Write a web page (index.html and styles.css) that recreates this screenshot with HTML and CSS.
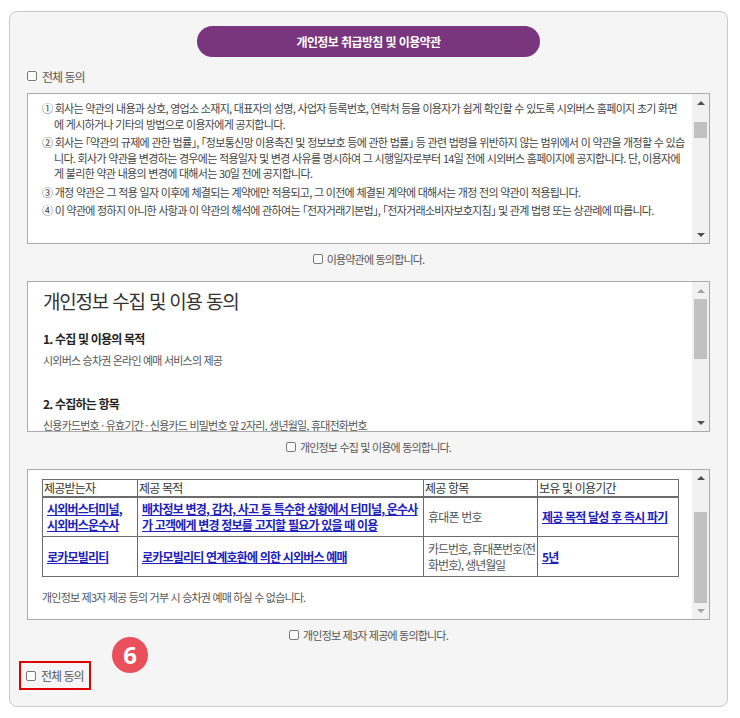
FILE: index.html
```html
<!DOCTYPE html>
<html lang="ko">
<head>
  <meta charset="UTF-8" />
  <meta name="viewport" content="width=device-width, initial-scale=1.0" />
  <title>개인정보 취급방침 및 이용약관</title>
  <link rel="stylesheet" href="styles.css">
</head>
<body>
  <section class="terms-wrap">
    <h1 class="terms-title">개인정보 취급방침 및 이용약관</h1>

    <label class="chk-all">
      <input type="checkbox" class="chk"> <span>전체 동의</span>
    </label>

    <!-- 이용약관 -->
    <div class="box">
      <div class="box-body terms-text">
        <p>① 회사는 약관의 내용과 상호, 영업소 소재지, 대표자의 성명, 사업자 등록번호, 연락처 등을 이용자가 쉽게 확인할 수 있도록 시외버스 홈페이지 초기 화면<br>에 게시하거나 기타의 방법으로 이용자에게 공지합니다.</p>
        <p>② 회사는 「약관의 규제에 관한 법률」, 「정보통신망 이용촉진 및 정보보호 등에 관한 법률」 등 관련 법령을 위반하지 않는 범위에서 이 약관을 개정할 수 있습<br>니다. 회사가 약관을 변경하는 경우에는 적용일자 및 변경 사유를 명시하여 그 시행일자로부터 14일 전에 시외버스 홈페이지에 공지합니다. 단, 이용자에<br>게 불리한 약관 내용의 변경에 대해서는 30일 전에 공지합니다.</p>
        <p>③ 개정 약관은 그 적용 일자 이후에 체결되는 계약에만 적용되고, 그 이전에 체결된 계약에 대해서는 개정 전의 약관이 적용됩니다.</p>
        <p>④ 이 약관에 정하지 아니한 사항과 이 약관의 해석에 관하여는 「전자거래기본법」, 「전자거래소비자보호지침」 및 관계 법령 또는 상관례에 따릅니다.</p>
      </div>
      <div class="sbar">
        <span class="arr up"></span>
        <div class="track"><div class="thumb thumb-1"></div></div>
        <span class="arr down"></span>
      </div>
    </div>
    <label class="agree-row">
      <input type="checkbox" class="chk"> <span>이용약관에 동의합니다.</span>
    </label>

    <!-- 개인정보 수집 -->
    <div class="box">
      <div class="box-body privacy">
        <h2>개인정보 수집 및 이용 동의</h2>
        <h3>1. 수집 및 이용의 목적</h3>
        <p>시외버스 승차권 온라인 예매 서비스의 제공</p>
        <h3 class="gap">2. 수집하는 항목</h3>
        <p>신용카드번호 · 유효기간 · 신용카드 비밀번호 앞 2자리, 생년월일, 휴대전화번호</p>
      </div>
      <div class="sbar">
        <span class="arr up off"></span>
        <div class="track"><div class="thumb thumb-2"></div></div>
        <span class="arr down"></span>
      </div>
    </div>
    <label class="agree-row">
      <input type="checkbox" class="chk"> <span>개인정보 수집 및 이용에 동의합니다.</span>
    </label>

    <!-- 제3자 제공 -->
    <div class="box">
      <div class="box-body third">
        <table class="third-tbl">
          <colgroup>
            <col class="c1"><col class="c2"><col class="c3"><col class="c4">
          </colgroup>
          <thead>
            <tr><th>제공받는자</th><th>제공 목적</th><th>제공 항목</th><th>보유 및 이용기간</th></tr>
          </thead>
          <tbody>
            <tr>
              <td><a href="#">시외버스터미널,<br>시외버스운수사</a></td>
              <td><a href="#">배차정보 변경, 감차, 사고 등 특수한 상황에서 터미널, 운수사<br>가 고객에게 변경 정보를 고지할 필요가 있을 때 이용</a></td>
              <td>휴대폰 번호</td>
              <td><a href="#">제공 목적 달성 후 즉시 파기</a></td>
            </tr>
            <tr>
              <td><a href="#">로카모빌리티</a></td>
              <td><a href="#">로카모빌리티 연계호환에 의한 시외버스 예매</a></td>
              <td class="items">카드번호, 휴대폰번호(전<br>화번호), 생년월일</td>
              <td><a href="#">5년</a></td>
            </tr>
          </tbody>
        </table>
        <p class="note">개인정보 제3자 제공 등의 거부 시 승차권 예매 하실 수 없습니다.</p>
      </div>
      <div class="sbar">
        <span class="arr up"></span>
        <div class="track"><div class="thumb thumb-3"></div></div>
        <span class="arr down off"></span>
      </div>
    </div>
    <label class="agree-row">
      <input type="checkbox" class="chk"> <span>개인정보 제3자 제공에 동의합니다.</span>
    </label>

    <div class="bottom-row">
      <label class="chk-all marked">
        <input type="checkbox" class="chk"> <span>전체 동의</span>
      </label>
      <span class="step-badge">6</span>
    </div>
  </section>
</body>
</html>
```

FILE: styles.css
```css
* {
  margin: 0;
  padding: 0;
  box-sizing: border-box;
}

body {
  font-family: "Noto Sans CJK KR", "Noto Sans", sans-serif;
  font-size: 11px;
  color: #444;
  background: #fff;
}

.terms-wrap {
  width: 719px;
  margin: 11px 0 0 9px;
  padding: 0 17px 16px;
  background: #f5f5f5;
  border: 1px solid #c9c9c9;
  border-radius: 8px;
}

.terms-title {
  width: 343px;
  height: 31px;
  margin: 14px auto 0;
  background: #7a357f;
  color: #fff;
  border-radius: 16px;
  font-size: 12px;
  font-weight: bold;
  letter-spacing: -0.6px;
  line-height: 31px;
  text-align: center;
}

.chk {
  appearance: none;
  -webkit-appearance: none;
  width: 10px;
  height: 10px;
  border: 1px solid #7a7a7a;
  border-radius: 2px;
  background: #fff;
  flex: none;
}

.chk-all {
  display: flex;
  align-items: center;
  gap: 5px;
  height: 16px;
  margin: 11px 0 9px;
  font-size: 12px;
  letter-spacing: -1px;
  color: #555;
}

.agree-row {
  display: flex;
  justify-content: center;
  align-items: center;
  gap: 4px;
  height: 16px;
  margin: 7px 0 14px;
  color: #555;
  letter-spacing: -0.8px;
}

/* 스크롤 박스 */
.box {
  display: flex;
  height: 151px;
  background: #fff;
  border: 1px solid #ababab;
}

.box-body {
  flex: 1;
  overflow: hidden;
}

.sbar {
  width: 17px;
  display: flex;
  flex-direction: column;
  background: #f1f1f1;
}

.arr {
  height: 17px;
  display: flex;
  justify-content: center;
  align-items: center;
}

.arr::before {
  content: "";
  border-left: 4px solid transparent;
  border-right: 4px solid transparent;
}

.arr.up::before {
  border-bottom: 4px solid #505050;
}

.arr.down::before {
  border-top: 4px solid #505050;
}

.arr.up.off::before {
  border-bottom-color: #a3a3a3;
}

.arr.down.off::before {
  border-top-color: #a3a3a3;
}

.track {
  flex: 1;
  padding: 0 2px;
}

.thumb {
  background: #c1c1c1;
}

.thumb-1 { margin-top: 11px; height: 16px; }
.thumb-2 { margin-top: 0; height: 60px; }
.thumb-3 { margin-top: 25px; height: 91px; }

.terms-text {
  padding: 7px 4px 0 14px;
  line-height: 15.5px;
  letter-spacing: -0.7px;
  font-feature-settings: "halt";
  color: #444;
}

.terms-text p {
  white-space: nowrap;
  padding-left: 12px;
  text-indent: -12px;
  margin-bottom: 3px;
}

.privacy {
  padding: 6px 6px 0 15px;
  color: #555;
  letter-spacing: -0.8px;
}

.privacy h2 {
  font-size: 19px;
  font-weight: normal;
  color: #333;
  line-height: 26px;
  letter-spacing: -1.2px;
}

.privacy h3 {
  font-size: 12px;
  font-weight: bold;
  color: #222;
  line-height: 18px;
  margin-top: 16px;
}

.privacy h3.gap {
  margin-top: 26px;
}

.privacy p {
  line-height: 18px;
  margin-top: 3px;
  white-space: nowrap;
}

.third {
  padding: 9px 6px 0 14px;
  letter-spacing: -0.8px;
}

.third-tbl {
  width: 636px;
  border-collapse: collapse;
  table-layout: fixed;
  font-size: 12px;
}

.third-tbl .c1 { width: 95px; }
.third-tbl .c2 { width: 286px; }
.third-tbl .c3 { width: 114px; }
.third-tbl .c4 { width: 141px; }

.third-tbl th {
  height: 17px;
  padding: 0 1px;
  font-weight: normal;
  text-align: left;
  color: #333;
  line-height: 15px;
  border: 1px solid #6b6b6b;
  border-bottom-width: 2px;
}

.third-tbl td {
  height: 40px;
  padding: 0 4px;
  line-height: 16px;
  color: #555;
  white-space: nowrap;
  border: 1px solid #6b6b6b;
  vertical-align: middle;
}

.third-tbl td.items {
  padding: 0 2px 0 4px;
  letter-spacing: -1.1px;
}

.third-tbl a {
  color: #2020c0;
  font-weight: bold;
}

.note {
  margin-top: 12px;
  line-height: 16px;
  color: #555;
}

.bottom-row {
  position: relative;
  margin-top: 18px;
}

.chk-all.marked {
  display: inline-flex;
  height: 29px;
  margin: 0 0 0 -8px;
  padding: 0 5px;
  border: 2px solid #e00000;
}

.step-badge {
  position: absolute;
  left: 85px;
  top: -24px;
  width: 36px;
  height: 36px;
  border-radius: 50%;
  background: #ea505b;
  color: #fff;
  font-family: "Open Sans", sans-serif;
  font-size: 24px;
  font-weight: bold;
  line-height: 36px;
  text-align: center;
}
```
